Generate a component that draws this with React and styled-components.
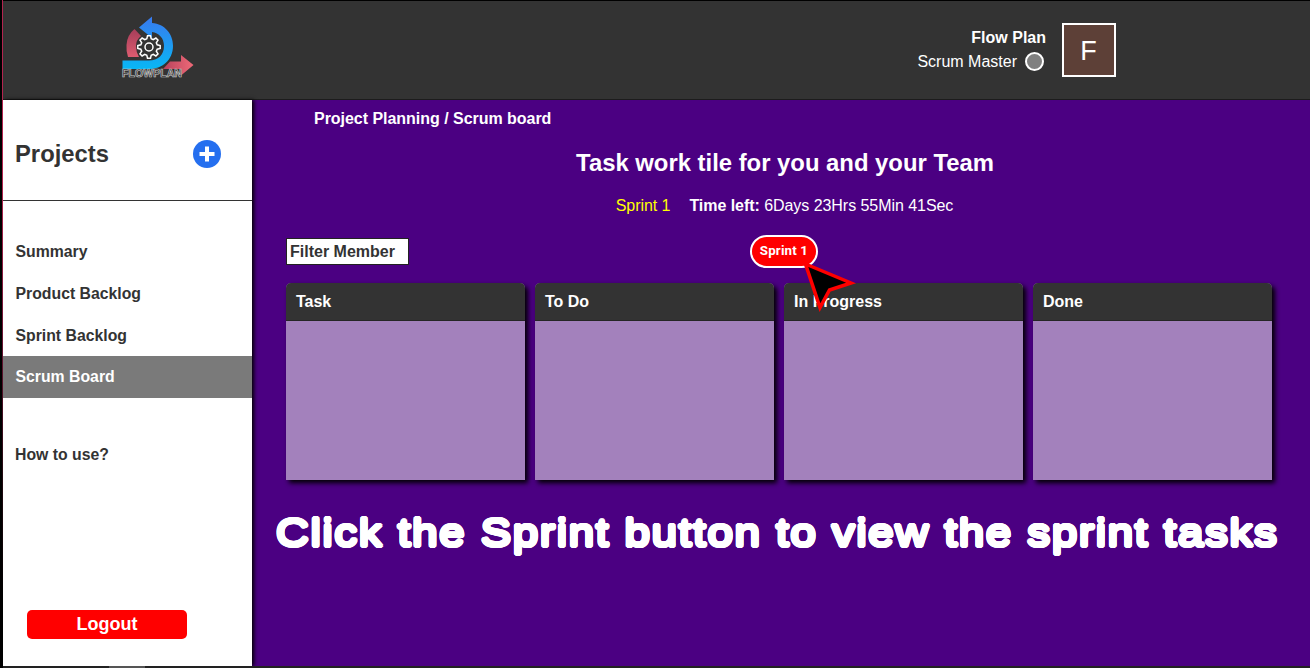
import React from "react";
import styled, { createGlobalStyle, css } from "styled-components";

const GlobalStyle = createGlobalStyle`
  * { box-sizing: border-box; }
  body {
    margin: 0;
    font-family: "Liberation Sans", Arial, sans-serif;
    font-size: 16px;
    line-height: 18px;
    color: #333;
  }
`;

const Frame = styled.div`
  position: relative;
  width: 1310px;
  height: 668px;
  padding: 1px 0 0 3px;
  display: grid;
  grid-template-rows: 99px 566px 2px;
  background: #000;
  overflow: hidden;
`;

const EdgeLine = styled.div`
  position: absolute;
  left: 2px;
  top: 0;
  width: 1px;
  height: 666px;
  background: linear-gradient(#b3244f 0, #b3244f 180px, #6a1433 340px, #200810 480px, #000 600px);
`;

const Header = styled.header`
  display: flex;
  justify-content: space-between;
  align-items: flex-start;
  padding: 0 194px 0 117px;
  background: #333;
  border-bottom: 1px solid #1c1c1c;
`;

const Logo = styled.svg`
  width: 80px;
  height: 70px;
  margin-top: 11px;
`;

const User = styled.div`
  display: flex;
  gap: 16px;
  margin-top: 22px;
  color: #fff;
`;

const UserText = styled.div`
  display: flex;
  flex-direction: column;
  align-items: flex-end;
  gap: 4px;
  padding-top: 5px;
  line-height: 20px;
  white-space: nowrap;
`;

const Name = styled.div`
  font-weight: bold;
  font-size: 16px;
`;

const Role = styled.div`
  display: flex;
  align-items: center;
  gap: 8px;
  padding-right: 2px;
`;

const Status = styled.span`
  width: 19px;
  height: 19px;
  margin-top: -1px;
  border: 2px solid #fff;
  border-radius: 50%;
  background: #808080;
`;

const Avatar = styled.div`
  width: 54px;
  height: 54px;
  border: 2px solid #fff;
  background: #5d4037;
  display: flex;
  align-items: center;
  justify-content: center;
  padding: 2px 1px 0 0;
  font-size: 27px;
  line-height: 32px;
`;

const Body = styled.div`
  display: grid;
  grid-template-columns: 249px 1fr;
  background: #4b0082;
`;

const Sidebar = styled.aside`
  display: flex;
  flex-direction: column;
  background: #fff;
  box-shadow: 2px 0 4px #000;
  font-weight: bold;
`;

const ProjectsBar = styled.div`
  height: 101px;
  flex: none;
  display: flex;
  align-items: center;
  justify-content: space-between;
  padding: 7px 31px 0 12px;
  border-bottom: 1px solid #333;
`;

const ProjectsTitle = styled.h2`
  margin: 0;
  font-size: 23.8px;
  line-height: 28px;
`;

const AddIcon = styled.svg`
  width: 28px;
  height: 28px;
`;

const Nav = styled.nav`
  display: flex;
  flex-direction: column;
  padding-top: 29px;
  font-size: 15.8px;
`;

const NavItem = styled.a`
  height: 42px;
  padding: ${(p) => (p.$active || p.$spaced ? 12 : 13)}px 13px 0 12.5px;
  ${(p) => p.$spaced && css`margin-top: 36px; padding-left: 12px;`}
  ${(p) => p.$active && css`background: #7a7a7a; color: #fff;`}
`;

const Logout = styled.button`
  width: 160px;
  height: 29px;
  margin: auto 0 27px 24px;
  padding: 0 0 2px;
  border: 0;
  border-radius: 5px;
  background: #f00;
  color: #fff;
  font: bold 18px/24px "Liberation Sans", Arial, sans-serif;
`;

const Main = styled.main`
  min-width: 0;
  display: flex;
  flex-direction: column;
  color: #fff;
`;

const Crumb = styled.div`
  padding: 10px 0 0 62px;
  font-weight: bold;
  letter-spacing: -0.03px;
`;

const Title = styled.h1`
  margin: 21px 0 0 8px;
  font-size: 23.85px;
  line-height: 28px;
  text-align: center;
`;

const SprintInfo = styled.div`
  display: flex;
  justify-content: center;
  gap: 19px;
  margin: 20px 0 0 7px;
  letter-spacing: -0.05px;
`;

const SprintName = styled.span`
  color: #ff0;
`;

const Tools = styled.div`
  display: grid;
  grid-template-columns: 1fr auto 1fr;
  align-items: center;
  height: 34px;
  margin: 19px 28px 15px 34px;
`;

const Filter = styled.div`
  width: 123px;
  height: 27px;
  margin-top: 1px;
  padding: 4px 3px;
  background: #fff;
  border: 1px solid #222;
  color: #333;
  font-weight: bold;
`;

const SprintButton = styled.button`
  position: relative;
  width: 68px;
  height: 33px;
  padding: 0;
  border: 2px solid #fff;
  border-radius: 17px;
  background: #f00;
  color: #fff;
  font: bold 13.33px/16px Roboto, "Liberation Sans", sans-serif;
  letter-spacing: 0.15px;
  white-space: nowrap;
`;

const Cursor = styled.svg`
  position: absolute;
  left: 49px;
  top: 22px;
  width: 60px;
  height: 60px;
  z-index: 2;
`;

const Board = styled.div`
  display: grid;
  grid-template-columns: repeat(4, 239px);
  column-gap: 10px;
  padding-left: 34.4px;
`;

const Column = styled.section`
  height: 197px;
  border-radius: 5px 5px 0 0;
  background: #a381bc;
  box-shadow: 3px 3px 5px #000;
`;

const ColumnHead = styled.div`
  height: 38px;
  padding: 10px 9.600px 0;
  border-radius: 5px 5px 0 0;
  background: #333;
  border-bottom: 1px solid #252525;
  font-weight: bold;
`;

const outline = Array.from({ length: 16 }, (_, i) => {
  const a = (i * Math.PI) / 8;
  return `${(Math.cos(a) * 1.5).toFixed(2)}px ${(Math.sin(a) * 1.7).toFixed(2)}px 0 #fff`;
}).join(", ");

const Caption = styled.p`
  width: max-content;
  margin: 26px 0 0 24px;
  font-size: 39.5px;
  line-height: 52px;
  letter-spacing: 1.56px;
  white-space: nowrap;
  transform: scaleX(1.15);
  transform-origin: left;
  text-shadow: ${outline};
`;

const Footer = styled.div`
  background: #222;
  padding-left: 106px;
`;

const FooterHandle = styled.div`
  width: 36px;
  height: 2px;
  background: #555;
`;

function FlowLogo() {
  return (
    <Logo viewBox="120 12 80 70">
      <defs>
        <linearGradient id="blue" x1="0" y1="0" x2="0" y2="1">
          <stop offset="0" stopColor="#3979ee" />
          <stop offset="1" stopColor="#08b7f5" />
        </linearGradient>
        <linearGradient id="rose" x1="0" y1="0" x2="0" y2="1">
          <stop offset="0" stopColor="#a63d59" />
          <stop offset="1" stopColor="#dd5c70" />
        </linearGradient>
        <linearGradient id="arrow" x1="0" y1="0" x2="1" y2="0">
          <stop offset="0" stopColor="#b7425c" />
          <stop offset="1" stopColor="#ef6a78" />
        </linearGradient>
      </defs>
      <path d="M134.500 29 L141 36 Q136 40 136 46 Q136 52 139 57 H128 Q126 51 126.500 45 Q127 35 134.500 29Z" fill="url(#rose)" />
      <path d="M139 27.500 L152 16.500 V23 C165 24 173 34 173 46 C173 60 162 69 149 69 H122.500 V60.500 H149 C158 60.500 164 55 164 46 C164 38 159 33 152 32 V38Z" fill="url(#blue)" />
      <path d="M170 61.500 H181 V55 L193.500 65 L181 75.500 V69 H163Z" fill="url(#arrow)" />
      <g stroke="#fff" strokeWidth="1.500" fill="#333">
        <path d="M147.500 36h3l.7 3 2 .9 2.700-1.700 2.100 2.100-1.700 2.700.9 2 3 .7v3l-3 .7-.9 2 1.700 2.700-2.100 2.100-2.700-1.700-2 .9-.7 3h-3l-.7-3-2-.9-2.700 1.700-2.100-2.100 1.700-2.700-.9-2-3-.7v-3l3-.7.9-2-1.700-2.700 2.100-2.100 2.700 1.700 2-.9z" transform="translate(0 -.2)" />
        <circle cx="149" cy="47" r="4" />
      </g>
      <text x="122" y="77" textLength="60" lengthAdjust="spacingAndGlyphs" fontSize="10" fontWeight="bold" fill="#222" stroke="#ccc" strokeWidth=".65" fontFamily="Liberation Sans">FLOWPLAN</text>
    </Logo>
  );
}

export default function App() {
  return (
    <Frame>
      <GlobalStyle />
      <EdgeLine />
      <Header>
        <FlowLogo />
        <User>
          <UserText>
            <Name>Flow Plan</Name>
            <Role>Scrum Master<Status /></Role>
          </UserText>
          <Avatar>F</Avatar>
        </User>
      </Header>
      <Body>
        <Sidebar>
          <ProjectsBar>
            <ProjectsTitle>Projects</ProjectsTitle>
            <AddIcon viewBox="0 0 28 28">
              <circle cx="14" cy="14" r="14" fill="#256fef" />
              <path d="M14 6.500v15M6.500 14h15" stroke="#fff" strokeWidth="4" />
            </AddIcon>
          </ProjectsBar>
          <Nav>
            <NavItem>Summary</NavItem>
            <NavItem>Product Backlog</NavItem>
            <NavItem>Sprint Backlog</NavItem>
            <NavItem $active>Scrum Board</NavItem>
            <NavItem $spaced>How to use?</NavItem>
          </Nav>
          <Logout>Logout</Logout>
        </Sidebar>
        <Main>
          <Crumb>Project Planning / Scrum board</Crumb>
          <Title>Task work tile for you and your Team</Title>
          <SprintInfo>
            <SprintName>Sprint 1</SprintName>
            <span><b>Time left:</b> 6Days 23Hrs 55Min 41Sec</span>
          </SprintInfo>
          <Tools>
            <Filter>Filter Member</Filter>
            <SprintButton>
              Sprint 1
              <Cursor viewBox="0 0 60 60">
                <path d="M4.500 5 L50 24 L28.500 31 L19 48.500Z" fill="#000" stroke="#f00" strokeWidth="3.500" strokeMiterlimit="8" />
              </Cursor>
            </SprintButton>
          </Tools>
          <Board>
            {["Task", "To Do", "In Progress", "Done"].map((name) => (
              <Column key={name}>
                <ColumnHead>{name}</ColumnHead>
              </Column>
            ))}
          </Board>
          <Caption>Click the Sprint button to view the sprint tasks</Caption>
        </Main>
      </Body>
      <Footer><FooterHandle /></Footer>
    </Frame>
  );
}
